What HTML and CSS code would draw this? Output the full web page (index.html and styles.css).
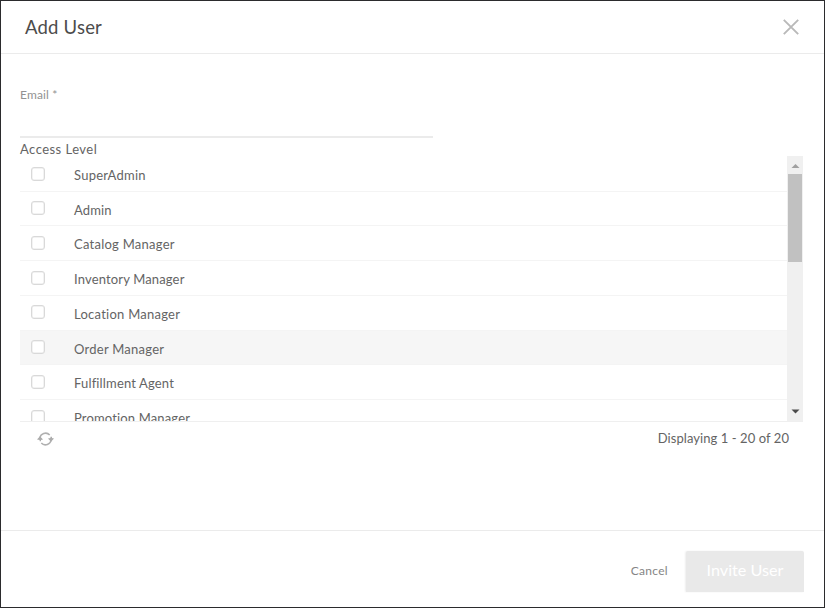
FILE: index.html
```html
<!DOCTYPE html>
<html lang="en">
<head>
<meta charset="utf-8">
<title>Add User</title>
<link rel="stylesheet" href="styles.css">
</head>
<body>
<section class="dialog">
  <header class="dialog-header">
    <h1 class="title">Add User</h1>
    <svg class="close" width="16" height="16" viewBox="0 0 16 16"><path d="M.8.8 15.2 15.2M15.2.8.8 15.2"/></svg>
  </header>
  <main class="dialog-body">
    <label class="field"><span class="field-label">Email *</span></label>
    <div class="group-label"><span>Access Level</span></div>
    <div class="grid">
      <div class="rows">
        <div class="row"><i class="check"></i><span class="name">SuperAdmin</span></div>
        <div class="row"><i class="check"></i><span class="name snug">Admin</span></div>
        <div class="row"><i class="check"></i><span class="name">Catalog Manager</span></div>
        <div class="row"><i class="check"></i><span class="name snug">Inventory Manager</span></div>
        <div class="row"><i class="check"></i><span class="name">Location Manager</span></div>
        <div class="row hovered"><i class="check"></i><span class="name">Order Manager</span></div>
        <div class="row"><i class="check"></i><span class="name snug">Fulfillment Agent</span></div>
        <div class="row"><i class="check"></i><span class="name snug">Promotion Manager</span></div>
      </div>
      <div class="scrollbar">
        <svg class="arrow" width="15" height="18" viewBox="0 0 15 18"><path fill="#a0a0a0" d="M3.5 12 7.5 8l4 4z"/></svg>
        <div class="thumb"></div>
        <svg class="arrow down" width="15" height="18" viewBox="0 0 15 18"><path fill="#4b4b4b" d="M3.5 6.5h8l-4 4z"/></svg>
      </div>
    </div>
    <div class="pager">
      <svg class="refresh" width="17" height="14" viewBox="0 0 17 14">
        <path class="arc" d="M2.9 6.5A5.7 5.7 0 0 1 12.7 3M14.1 7.5A5.7 5.7 0 0 1 4.3 11"/>
        <path class="tip" d="M0 7.5 3 4.3l3 3.2-2 .4v1.4H2.6V7.9zM11 6.5l3 3.2 3-3.2-2-.4V4.7h-1.6v1.4z"/>
      </svg>
      <span class="count">Displaying 1 - 20 of 20</span>
    </div>
  </main>
  <footer class="dialog-footer">
    <span class="cancel">Cancel</span>
    <button class="invite" disabled><span>Invite User</span></button>
  </footer>
</section>
</body>
</html>
```
FILE: styles.css
```css
* { box-sizing: border-box; }
body { margin: 0; background: #fff; font-family: Lato, "Liberation Sans", sans-serif; font-size: 13px; color: #646464; }
.dialog { width: 825px; height: 608px; border: 1px solid #2b2b2d; display: flex; flex-direction: column; overflow: hidden; }
.dialog-header { height: 53px; flex: none; border-bottom: 1px solid #ebebeb; padding: 0 25px 0 24px; display: flex; align-items: center; justify-content: space-between; }
.title { margin: 0; font-size: 18.5px; font-weight: 400; line-height: 24px; letter-spacing: .2px; color: #4c4c4c; }
.close { fill: none; stroke: #b9b9b9; stroke-width: 1.9; }
.dialog-body { flex: 1; padding: 0 21px 0 19px; }
.field { display: block; width: 413px; height: 84px; border-bottom: 2px solid #ebebeb; padding-top: 33px; }
.field-label { display: block; font-size: 12px; line-height: 16px; letter-spacing: .15px; color: #929292; }
.group-label { height: 18px; line-height: 22px; letter-spacing: .46px; }
.grid { height: 266px; display: flex; border-bottom: 1px solid #efefef; overflow: hidden; }
.rows { flex: 1; overflow: hidden; }
.row { height: 34.75px; padding: 1px 0 0 11px; display: flex; align-items: flex-start; border-bottom: 1px solid #f4f4f4; }
.row:first-child { height: 35.5px; padding-top: 1px; }
.row + .row { padding-top: 0; }
.row.hovered { background: #f6f6f6; }
.check { width: 14px; height: 14px; flex: none; margin-top: 9.6px; border: 1.5px solid #d9d9d9; border-radius: 3px; background: #fff; box-shadow: inset 0 0 0 .5px #e6e6e6; }
.name { margin: 10px 0 0 29px; line-height: 16px; letter-spacing: .25px; }
.snug { letter-spacing: .15px; }
.scrollbar { width: 16px; height: 265px; background: #f0f0f0; padding-left: 1px; display: flex; flex-direction: column; }
.arrow { flex: none; display: block; }
.thumb { width: 14px; height: 88px; background: #c1c1c1; }
.down { margin-top: auto; }
.pager { display: flex; align-items: center; justify-content: space-between; height: 32px; padding: 0 14px 0 17px; }
.refresh { margin-top: 2px; }
.arc { fill: none; stroke: #b0b0b0; stroke-width: 1.6; }
.tip { fill: #acacac; }
.count { letter-spacing: .07px; }
.dialog-footer { height: 77px; flex: none; border-top: 1px solid #ebebeb; padding: 20px 20px 0 0; display: flex; justify-content: flex-end; align-items: flex-start; }
.cancel { font-size: 12px; line-height: 40px; color: #858585; margin-right: 18px; letter-spacing: .3px; }
.invite { width: 118px; height: 41px; border: 0; border-radius: 2px 2px 0 0; background: #e9e9e9; color: #fff; font: 400 16.2px/38px Lato, sans-serif; padding: 0 0 3px; box-shadow: -1px 0 2px #eee; }
```
